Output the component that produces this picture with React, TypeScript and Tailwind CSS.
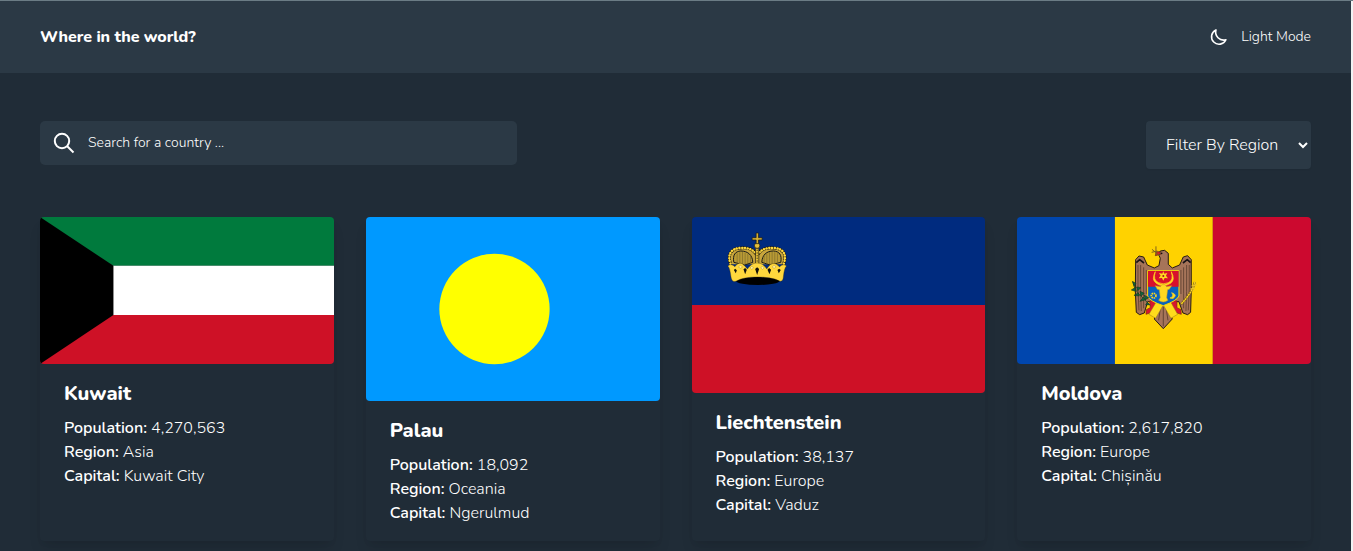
import type { ReactNode } from "react";

function KuwaitFlag() {
  return (
    <svg viewBox="0 0 294 147" preserveAspectRatio="none" className="block h-[147px] w-full rounded">
      <path d="M0 0H295V48.8H0Z" fill="#007a3d" />
      <path d="M0 48.8H295V98.1H0Z" fill="#fff" />
      <path d="M0 98.1H295V147H0Z" fill="#ce1126" />
      <path d="M0 0L73.5 48.8V98.1L0 147Z" fill="#000" />
    </svg>
  );
}

function PalauFlag() {
  return (
    <svg viewBox="0 0 294 184" preserveAspectRatio="none" className="block h-[184px] w-full rounded">
      <rect width="295" height="184" fill="#0099ff" />
      <circle cx="128.6" cy="92" r="55.2" fill="#ffff00" />
    </svg>
  );
}

function LiechtensteinFlag() {
  return (
    <svg viewBox="0 0 294 176" preserveAspectRatio="none" className="block h-[176px] w-full rounded">
      <rect width="294" height="88" fill="#002b7f" />
      <rect y="88" width="294" height="88" fill="#ce1126" />
      <g transform="translate(23.2 8) scale(.3333)">
        <path d="M49 118C38 88 50 67 76 66C98 64 115 72 122 84V60H130V84C138 72 154 64 176 66C202 67 213 88 204 118Z" fill="#c8a53c" />
        <path d="M56 112C52 90 60 79 77 78C98 78 112 90 113 112L88 120Z" fill="#b89a35" stroke="#171a18" strokeWidth="3" />
        <path d="M197 112C201 90 193 79 175 78C154 78 141 90 140 112L165 120Z" fill="#b89a35" stroke="#171a18" strokeWidth="3" />
        <path d="M66 85V116M74 82V116M82 81V118M90 83V118M98 86V116M106 92V116M147 92V116M155 86V116M163 82V118M171 81V118M179 82V116M187 85V116" stroke="#7b692c" strokeWidth="2" />
        <path d="M46 116C36 88 48 70 76 69C98 67 114 74 122 86M206 116C216 88 204 70 176 69C154 67 138 74 130 86" fill="none" stroke="#1a1810" strokeWidth="9" strokeLinecap="round" />
        <path d="M46 116C36 88 48 70 76 69C98 67 114 74 122 86M206 116C216 88 204 70 176 69C154 67 138 74 130 86" fill="none" stroke="#ffd83d" strokeWidth="7.5" strokeLinecap="round" strokeDasharray="0.1 8" />
        <path d="M121 70H131V120H121Z" fill="#e6bf38" stroke="#1a1810" strokeWidth="2" />
        <path d="M126 74V116" stroke="#4a3d12" strokeWidth="3" strokeDasharray="4 4" />
        <circle cx="126" cy="62" r="8" fill="#e8c23a" stroke="#1a1810" strokeWidth="2" />
        <path d="M123 24H130V38H141V45H130V56H123V45H111V38H123Z" fill="#d6b034" stroke="#1a1810" strokeWidth="2" />
        <ellipse cx="128" cy="168" rx="65" ry="12" fill="#000" />
        <path d="M38 123C45 117 52 118 59 125C66 115 75 112 82 117C89 122 92 127 97 132C104 122 112 114 126 114C140 114 148 122 155 132C160 125 164 117 172 116C181 114 187 119 193 126C201 118 208 118 214 123C209 128 207 137 205 153C204 166 201 169 195 169C178 159 150 156 127 156C101 156 78 159 62 169C53 171 49 166 47 153C45 137 43 128 38 123Z" fill="#ffd83d" stroke="#3d310a" strokeWidth="1" />
        <path d="M56 135L60 131L65 136L62 145ZM85 133L90 129L95 134L90 148ZM120 132L126 127L132 132L126 150ZM157 134L162 129L168 134L163 148ZM187 135L192 131L197 135L191 145Z" fill="#14130d" />
        <path d="M70 126L76 121L82 126L76 130ZM105 129L110 123L115 129L110 133ZM137 129L142 123L147 129L142 133ZM171 126L177 121L183 126L177 130Z" fill="#fff0a0" stroke="#967719" />
      </g>
    </svg>
  );
}

function MoldovaFlag() {
  return (
    <svg viewBox="0 0 294 147" preserveAspectRatio="none" className="block h-[147px] w-full rounded">
      <rect width="98" height="147" fill="#0046ae" />
      <rect x="98" width="98" height="147" fill="#ffd200" />
      <rect x="196" width="99" height="147" fill="#cc092f" />
      <g transform="translate(102.75 18) scale(.3333)" strokeLinejoin="round">
        <path d="M48 74L58 63L72 66L83 90L104 99L118 92L122 70L117 58L122 48L135 46L146 55V88L158 99L180 90L191 66L204 62L215 74L215 168L213 232L204 239L190 234L178 200H84L74 234L60 239L50 232L47 168Z" fill="#a67459" stroke="#271b12" strokeWidth="3" />
        <path d="M122 205H141L158 252L131 281L104 252Z" fill="#a67459" stroke="#271b12" strokeWidth="3" />
        <path d="M131 215V274M122 222L117 256M140 222L145 256" fill="none" stroke="#3f2a1f" strokeWidth="2" />
        <path d="M55 90V163L58 226M63 90V169L65 228M72 97V175L72 220M80 105V177M209 90V163L206 226M201 90V169L199 228M192 97V175L192 220M184 105V177" fill="none" stroke="#4b3326" strokeWidth="2" />
        <path d="M50 83L60 74L73 84M213 83L203 74L190 84" fill="none" stroke="#191515" strokeWidth="5" />
        <path d="M123 58L107 62L110 50L121 50Z" fill="#d61f2c" stroke="#5a2e18" strokeWidth="2" />
        <path d="M97 43L121 63M109 34V60M96 52L113 48" stroke="#80631c" strokeWidth="3" />
        <circle cx="126" cy="55" r="2.5" fill="#111" />
        <path d="M90 198L113 195L99 231L79 238L80 224L92 218ZM172 198L149 195L163 231L185 238L184 224L172 218Z" fill="#d7172e" stroke="#7b2615" strokeWidth="2" />
        <path d="M112 197L88 238L108 250L131 210L154 250L174 238L151 197L133 205Z" fill="#ffdc1c" stroke="#997719" strokeWidth="1.5" />
        <path d="M84 107H178V183Q173 197 131 212Q90 199 84 183Z" fill="#0962bd" stroke="#ffdc00" strokeWidth="3" />
        <path d="M85 108H177V155H85Z" fill="#d8102c" />
        <path d="M107 110Q94 134 110 145Q119 152 130 152Q142 152 153 145Q168 134 155 110Q163 136 146 143Q131 150 117 143Q99 136 107 110Z" fill="#ffd820" stroke="#ffd820" strokeWidth="2" />
        <path d="M131 109L134 116L143 114L139 122L145 130L135 129L131 137L127 129L117 130L123 122L118 114L128 116Z" fill="#ffd820" />
        <circle cx="131" cy="123" r="3" fill="#a81320" />
        <path d="M107 152L122 155L127 149H136L141 155L156 152L149 163L144 164L141 188L145 196Q131 206 117 196L122 188L119 164L113 163Z" fill="#ffd820" stroke="#c5a122" strokeWidth="1.5" />
        <circle cx="102" cy="182" r="7" fill="none" stroke="#ffd820" strokeWidth="5" strokeDasharray="4 2" />
        <path d="M156 173Q165 185 151 189Q164 194 167 181Q165 175 156 173Z" fill="#ffd820" stroke="#ffd820" strokeWidth="2" />
        <path d="M39 139Q45 169 70 189L91 211" fill="none" stroke="#284d29" strokeWidth="3" />
        <path d="M39 140L49 145L44 154ZM46 158L35 165L48 169ZM51 156L64 158L54 167ZM56 174L43 181L59 183ZM61 169L74 175L64 183ZM71 187L61 199L78 194ZM73 180L87 188L77 194ZM83 202L78 210L90 209Z" fill="#11643b" stroke="#173b22" strokeWidth="2" />
        <path d="M226 141Q220 170 184 208" fill="none" stroke="#86671a" strokeWidth="7" />
        <path d="M226 141Q220 170 184 208" fill="none" stroke="#ffda25" strokeWidth="4" strokeDasharray="6 2" />
        <path d="M216 153L231 149M213 162L226 160" stroke="#ecc527" strokeWidth="4" />
      </g>
    </svg>
  );
}

type Country = {
  name: string;
  population: string;
  region: string;
  capital: string;
  flag: ReactNode;
};

const countries: Country[] = [
  { name: "Kuwait", population: "4,270,563", region: "Asia", capital: "Kuwait City", flag: <KuwaitFlag /> },
  { name: "Palau", population: "18,092", region: "Oceania", capital: "Ngerulmud", flag: <PalauFlag /> },
  { name: "Liechtenstein", population: "38,137", region: "Europe", capital: "Vaduz", flag: <LiechtensteinFlag /> },
  { name: "Moldova", population: "2,617,820", region: "Europe", capital: "Chișinău", flag: <MoldovaFlag /> },
];

function Detail({ label, value }: { label: string; value: string }) {
  return (
    <p className="text-base leading-6">
      <span className="font-semibold">{label}:</span> <span className="font-light">{value}</span>
    </p>
  );
}

function CountryCard({ country }: { country: Country }) {
  return (
    <article className="rounded bg-[#202c37] shadow-[0_10px_15px_-3px_rgba(0,0,0,0.1),0_4px_6px_-2px_rgba(0,0,0,0.05)]">
      {country.flag}
      <div className="px-6 pt-4">
        <h2 className="mb-2 text-xl leading-7 font-extrabold">{country.name}</h2>
        <Detail label="Population" value={country.population} />
        <Detail label="Region" value={country.region} />
        <Detail label="Capital" value={country.capital} />
      </div>
    </article>
  );
}

export default function App() {
  return (
    <div className="h-[551px] overflow-hidden border-t border-[#6b7c85] bg-[#f1f2f3] pr-[2px] font-['Nunito','Lato',sans-serif] text-white">
      <div className="h-full bg-[#202c37]">
        <header className="flex h-[72px] items-center justify-between bg-[#2b3945] px-10">
          <h1 className="text-base leading-6 font-extrabold tracking-[-0.05px]">Where in the world?</h1>
          <button className="flex items-center gap-[14px] text-sm leading-5 font-light">
            <svg viewBox="0 0 18 18" className="size-[18px]" fill="none" stroke="currentColor" strokeWidth="1.6" strokeLinejoin="round">
              <path d="M7 1.9A7.5 7.5 0 1 0 16.9 11.8A8 8 0 0 1 7 1.9Z" />
            </svg>
            <span>Light Mode</span>
          </button>
        </header>
        <main className="px-10 pt-12">
          <div className="flex h-12 items-start justify-between">
            <label className="flex h-11 w-[477px] items-center rounded-[5px] bg-[#2b3945] pl-[13px]">
              <svg viewBox="0 0 22 22" className="size-[22px]" fill="none" stroke="currentColor" strokeWidth="2">
                <circle cx="9" cy="9" r="7.2" />
                <path d="M14 14L20.5 20.5" />
              </svg>
              <span className="ml-[13px] text-sm leading-5 font-light">Search for a country ...</span>
            </label>
            <button className="flex h-12 w-[165px] items-center justify-between rounded bg-[#2b3945] pr-[3px] pl-5 text-base font-light shadow-[0_1px_2px_rgba(0,0,0,0.05)]">
              <span>Filter By Region</span>
              <svg viewBox="0 0 10 7" className="h-[7px] w-[10px]" fill="none" stroke="currentColor" strokeWidth="2">
                <path d="M1 1L5 5L9 1" />
              </svg>
            </button>
          </div>
          <section className="mt-12 grid h-[324px] grid-cols-4 gap-8">
            {countries.map((country) => (
              <CountryCard key={country.name} country={country} />
            ))}
          </section>
        </main>
      </div>
    </div>
  );
}
